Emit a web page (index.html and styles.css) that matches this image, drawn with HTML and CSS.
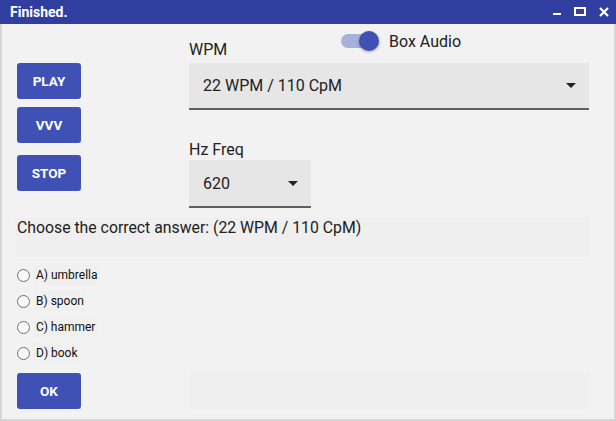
FILE: index.html
```html
<!DOCTYPE html>
<html lang="en">
  <head>
    <meta charset="UTF-8" />
    <meta name="viewport" content="width=device-width, initial-scale=1.0" />
    <title>Finished.</title>
    <link rel="stylesheet" href="styles.css">
  </head>
  <body>
    <div class="titlebar">
      <span class="title">Finished.</span>
      <div class="controls">
        <svg width="10" height="10" viewBox="0 0 10 10"><rect x="1" y="6" width="8" height="2" fill="#fff"/></svg>
        <svg width="13" height="10" viewBox="0 0 13 10"><rect x="1" y="1" width="10" height="7" fill="none" stroke="#fff" stroke-width="2"/></svg>
        <svg width="11" height="10" viewBox="0 0 11 10"><path d="M1 1 L9 9 M9 1 L1 9" stroke="#fff" stroke-width="2.2"/></svg>
      </div>
    </div>

    <div class="window">
      <div class="top">
        <div class="buttons">
          <button class="button">PLAY</button>
          <button class="button">VVV</button>
          <button class="button stop">STOP</button>
        </div>

        <div class="fields">
          <div class="head">
            <span class="field-label">WPM</span>
            <div class="toggle">
              <span class="switch"><span class="track"></span><span class="thumb"></span></span>
              <span class="toggle-text">Box Audio</span>
            </div>
          </div>
          <div class="select wide">
            <span>22 WPM / 110 CpM</span>
            <span class="arrow"></span>
          </div>
          <span class="field-label hz">Hz Freq</span>
          <div class="select narrow">
            <span>620</span>
            <span class="arrow"></span>
          </div>
        </div>
      </div>

      <div class="question">Choose the correct answer: (22 WPM / 110 CpM)</div>

      <ul class="answers">
        <li><span class="radio"></span><span class="answer">A) umbrella</span></li>
        <li><span class="radio"></span><span class="answer">B) spoon</span></li>
        <li><span class="radio"></span><span class="answer">C) hammer</span></li>
        <li><span class="radio"></span><span class="answer">D) book</span></li>
      </ul>

      <div class="bottom">
        <button class="button">OK</button>
        <div class="result"></div>
      </div>
    </div>
  </body>
</html>
```

FILE: styles.css
```css
body {
  margin: 0;
  font-family: Roboto, "Liberation Sans", sans-serif;
  color: #212121;
  background-color: #f2f2f2;
}

.titlebar {
  height: 24px;
  background-color: #303f9f;
  display: flex;
  align-items: center;
  justify-content: space-between;
  padding: 0 6px 0 10px;
}

.title {
  color: white;
  font-weight: bold;
  font-size: 14px;
}

.controls {
  display: flex;
  align-items: center;
  gap: 12px;
}

.controls svg {
  display: block;
}

.window {
  height: 397px;
  box-sizing: border-box;
  border: 2px solid #d6d6d6;
  border-top: none;
  padding: 0 25px 0 15px;
}

.top {
  display: grid;
  grid-template-columns: 64px 400px;
  column-gap: 108px;
}

.buttons {
  display: flex;
  flex-direction: column;
  padding-top: 39px;
}

.button {
  width: 64px;
  height: 36px;
  border: none;
  border-radius: 3px;
  background-color: #3f51b5;
  color: white;
  font-family: Roboto, "Liberation Sans", sans-serif;
  font-weight: bold;
  font-size: 13.5px;
  padding: 0;
}

.buttons .button + .button {
  margin-top: 8px;
}

.buttons .stop {
  margin-top: 12px !important;
}

.head {
  height: 35px;
  margin-bottom: 4px;
  display: grid;
  grid-template-columns: 152px auto;
}

.field-label {
  display: block;
  font-size: 16px;
  line-height: 19px;
  align-self: end;
}

.toggle {
  display: flex;
  align-items: center;
  align-self: start;
  margin-top: 5px;
}

.switch {
  position: relative;
  width: 40px;
  height: 24px;
}

.track {
  position: absolute;
  left: 0;
  top: 5px;
  width: 34px;
  height: 14px;
  border-radius: 7px;
  background-color: #a8b0dc;
}

.thumb {
  position: absolute;
  left: 18px;
  top: 2px;
  width: 20px;
  height: 20px;
  border-radius: 50%;
  background-color: #3f51b5;
  box-shadow: 0 1px 3px rgba(0, 0, 0, 0.35);
}

.toggle-text {
  font-size: 16px;
  margin-left: 8px;
}

.select {
  height: 47px;
  box-sizing: border-box;
  background-color: #e6e6e6;
  border-bottom: 2px solid #5f5f5f;
  display: flex;
  align-items: center;
  justify-content: space-between;
  padding: 0 13px 0 14px;
  font-size: 16px;
}

.select.narrow {
  width: 122px;
  height: 48px;
}

.arrow {
  width: 0;
  height: 0;
  border-left: 5px solid transparent;
  border-right: 5px solid transparent;
  border-top: 5px solid #222;
}

.hz {
  margin-top: 30px;
  margin-bottom: 1px;
}

.question {
  margin-top: 10px;
  height: 39px;
  background-color: #efefef;
  font-size: 15.8px;
  line-height: 19px;
  padding-left: 2px;
  margin-left: -2px;
}

.answers {
  list-style: none;
  margin: 5px 0 0;
  padding: 0;
}

.answers li {
  height: 26px;
  display: flex;
  align-items: center;
}

.radio {
  width: 11px;
  height: 11px;
  border: 1px solid #707070;
  border-radius: 50%;
  background-color: #f8f8f8;
}

.answer {
  font-size: 12px;
  margin-left: 4px;
  padding: 3px 2px;
  background-color: #f0f0f0;
  color: #111;
}

.bottom {
  margin-top: 7px;
  display: grid;
  grid-template-columns: 64px 400px;
  column-gap: 108px;
}

.result {
  height: 36px;
  background-color: #eeeeee;
}
```
